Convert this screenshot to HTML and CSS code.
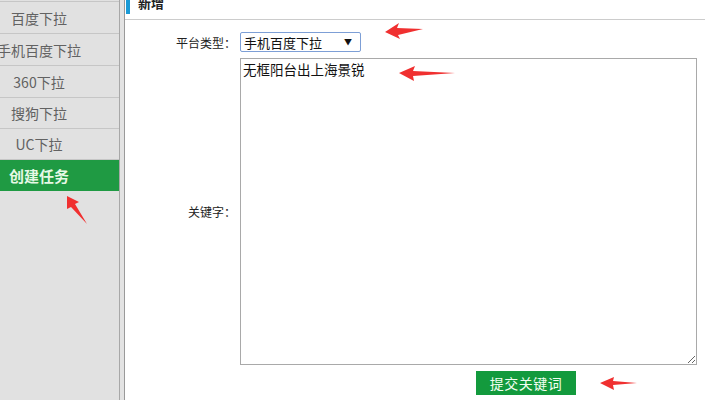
FILE: index.html
```html
<!DOCTYPE html>
<html lang="zh-CN">

<head>
    <meta charset="utf-8">
    <link rel="stylesheet" href="styles.css">
</head>

<body>
    <div class="page">
        <div class="sidebar">
            <ul class="menu">
                <li><span>百度下拉</span></li>
                <li><span>手机百度下拉</span></li>
                <li><span>360下拉</span></li>
                <li class="short"><span>搜狗下拉</span></li>
                <li class="short"><span>UC下拉</span></li>
                <li class="active"><span>创建任务</span></li>
            </ul>
        </div>
        <div class="splitter"></div>
        <div class="main">
            <div class="main-head">
                <h2>新增</h2>
            </div>
            <form class="form">
                <label class="label">平台类型：</label>
                <div class="select-wrap">
                    <select class="select">
                        <option>手机百度下拉</option>
                        <option>百度下拉</option>
                        <option>360下拉</option>
                        <option>搜狗下拉</option>
                        <option>UC下拉</option>
                    </select>
                </div>
                <label class="label">关键字：</label>
                <textarea class="keywords">无框阳台出上海景锐</textarea>
                <div></div>
                <button type="button" class="submit">提交关键词</button>
            </form>
        </div>
    </div>

    <!-- red annotation arrows drawn over the screenshot -->
    <svg class="marks" width="705" height="400" viewBox="0 0 705 400">
        <g fill="#f03030">
            <path d="M385 32 L399 23 L397 28 L423 29 L398 35 L400 39 Z" />
            <path d="M399 73 L415 66 L413 71 L455 73 L413 76 L414 81 Z" />
            <path d="M600 383 L614 377 L613 381 L637 383 L613 385 L614 390 Z" />
            <path d="M67 196 L79 202 L75 204 L87 224 L71 207 L67 209 Z" />
        </g>
    </svg>
</body>

</html>
```

FILE: styles.css
```css
body {
    margin: 0;
    padding: 0;
    font-family: "Noto Sans CJK SC", "DejaVu Sans", sans-serif;
    background: white;
}

.page {
    display: flex;
    height: 400px;
    overflow: hidden;
}

.sidebar {
    width: 119px;
    background: #e1e1e1;
    border-right: 1px solid #a8a8a8;
    flex-shrink: 0;
}

.menu {
    list-style: none;
    margin: 1px 0 0 0;
    padding: 0;
    border-top: 1px solid #c6c6c6;
}

.menu li {
    box-sizing: border-box;
    height: 32px;
    width: 119px;
    padding-right: 41px;
    border-bottom: 1px solid #c6c6c6;
    display: flex;
    align-items: center;
    justify-content: center;
    font-size: 14px;
    color: #626262;
    white-space: nowrap;
}

.menu li span {
    display: flex;
    justify-content: center;
    width: 78px;
}

.menu li.short {
    height: 31px;
}

.menu li.active {
    height: 31px;
    border-bottom: none;
    background: #1f9a43;
    color: #e6f8e6;
    font-weight: bold;
    font-size: 15px;
}

.splitter {
    width: 4px;
    background: #e3e3e3;
    border-right: 1px solid #9a9a9a;
    flex-shrink: 0;
}

.main {
    flex: 1;
}

.main-head {
    height: 19px;
    border-bottom: 1px solid #cccccc;
    overflow: hidden;
}

.main-head h2 {
    margin: -9px 0 0 1px;
    padding: 0 0 0 8px;
    border-left: 4px solid #1a9ad6;
    font-size: 13px;
    line-height: 23px;
    color: #222;
}

.form {
    display: grid;
    grid-template-columns: 111px 457px;
    column-gap: 4px;
    row-gap: 6px;
    margin-top: 12px;
    align-items: center;
}

.label {
    text-align: right;
    font-size: 12px;
    color: #222;
}

.select-wrap {
    position: relative;
    width: 121px;
    height: 20px;
}

.select-wrap::after {
    content: "▼";
    position: absolute;
    right: 9px;
    top: 4px;
    font-size: 8px;
    line-height: 12px;
    color: #111;
    pointer-events: none;
}

.select {
    display: block;
    appearance: none;
    width: 121px;
    height: 20px;
    box-sizing: border-box;
    border: 1px solid #7d9fd6;
    border-radius: 2px;
    background: white;
    padding: 0 3px;
    font-family: "Noto Sans CJK SC", sans-serif;
    font-size: 13px;
    color: #111;
}

.keywords {
    display: block;
    width: 457px;
    height: 307px;
    box-sizing: border-box;
    border: 1px solid #a9a9a9;
    padding: 2px 2px;
    font-family: "Noto Sans CJK SC", sans-serif;
    font-size: 13.5px;
    line-height: 17px;
    color: #111;
    resize: both;
}

.submit {
    justify-self: start;
    margin-left: 236px;
    width: 100px;
    height: 24px;
    border: none;
    background: #139a3d;
    color: #f2fff2;
    font-family: "Noto Sans CJK SC", sans-serif;
    font-size: 14px;
    letter-spacing: 0.5px;
    padding: 0;
    cursor: pointer;
}

.marks {
    position: absolute;
    left: 0;
    top: 0;
    pointer-events: none;
}
```
